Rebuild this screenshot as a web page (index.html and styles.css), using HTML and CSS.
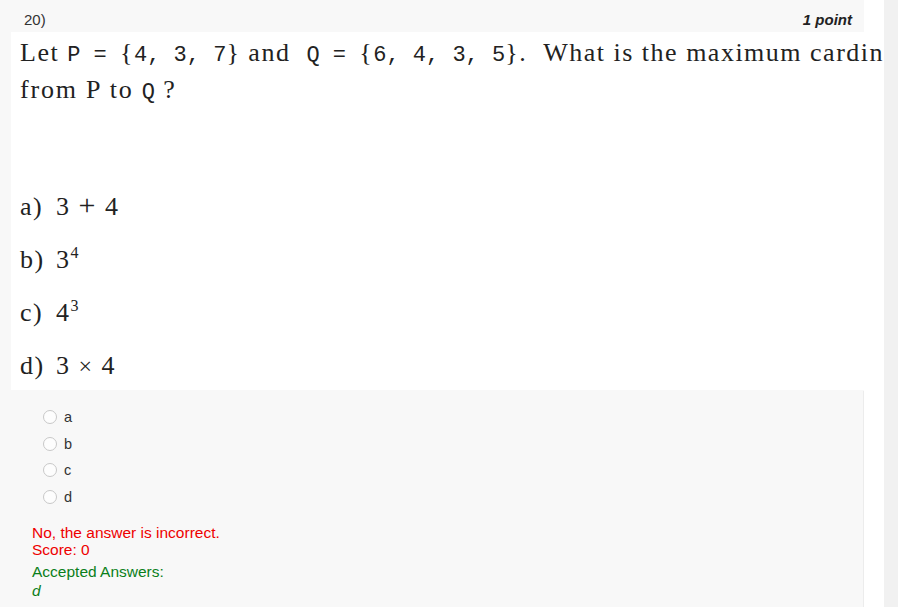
FILE: index.html
```html
<!DOCTYPE html>
<html>
<head>
<meta charset="utf-8">
<link rel="stylesheet" href="styles.css">
</head>
<body>
<div class="page">
  <div class="main">
    <div class="header">
      <span class="qnum">20)</span>
      <span class="points">1 point</span>
    </div>
    <div class="figure">
      <div class="line l1">Let <span class="tt">P = </span>{<span class="tt">4, 3, 7</span>} and <span class="tt gap">Q = </span>{<span class="tt">6, 4, 3, 5</span>}.<span class="sentence">What is the maximum cardinality of a relation</span></div>
      <div class="line l2">from P to <span class="tt">Q</span> ?</div>
      <div class="opts">
        <div class="opt"><span class="tag">a)</span><span>3</span><span class="op">+</span><span>4</span></div>
        <div class="opt"><span class="tag">b)</span><span>3<sup>4</sup></span></div>
        <div class="opt"><span class="tag">c)</span><span>4<sup>3</sup></span></div>
        <div class="opt"><span class="tag">d)</span><span>3</span><span class="op times">×</span><span>4</span></div>
      </div>
    </div>
    <div class="answers">
      <div class="choice"><span class="radio"></span><span class="lbl">a</span></div>
      <div class="choice"><span class="radio"></span><span class="lbl">b</span></div>
      <div class="choice"><span class="radio"></span><span class="lbl">c</span></div>
      <div class="choice"><span class="radio"></span><span class="lbl">d</span></div>
      <div class="feedback">
        <div class="wrong">No, the answer is incorrect.<br>Score: 0</div>
        <div class="accepted">Accepted Answers:<br><em>d</em></div>
      </div>
    </div>
  </div>
  <div class="gutter"></div>
  <div class="scroll"></div>
</div>
</body>
</html>
```

FILE: styles.css
```css
html, body {
  margin: 0;
  padding: 0;
  background: #ffffff;
}
.page {
  display: flex;
  height: 607px;
  overflow: hidden;
}
.main {
  width: 864px;
  flex: none;
  background: #f8f8f8;
  font-family: "Liberation Sans", Arial, sans-serif;
  color: #333333;
  position: relative;
  z-index: 1;
}
.gutter {
  width: 20px;
  flex: none;
}
.scroll {
  width: 14px;
  flex: none;
  background: #f1f1f1;
  position: relative;
  z-index: 2;
}
.header {
  height: 32px;
  display: flex;
  justify-content: space-between;
  align-items: center;
  padding: 7px 12px 0 24px;
  box-sizing: border-box;
  font-size: 15px;
}
.points {
  font-weight: bold;
  font-style: italic;
  color: #222;
}
.figure {
  margin-left: 11px;
  width: 872px;
  height: 358px;
  background: #ffffff;
  overflow: hidden;
  box-sizing: border-box;
  padding: 4px 0 0 9px;
  font-family: "Liberation Serif", "Times New Roman", serif;
  font-size: 26px;
  letter-spacing: 1.5px;
  color: #222;
}
.line {
  white-space: pre;
  line-height: 34px;
}
.tt {
  font-family: "Liberation Mono", "Courier New", monospace;
  font-size: 22px;
  letter-spacing: 0;
  color: #222;
}
.gap {
  margin-left: 8px;
}
.sentence {
  margin-left: 16px;
}
.l2 {
  letter-spacing: 1.8px;
}
.opts {
  margin-top: 68px;
}
.opt {
  line-height: 53px;
  display: flex;
  align-items: baseline;
}
.tag {
  width: 36px;
}
.op {
  margin: 0 8px;
  font-size: 30px;
}
.times {
  font-size: 24px;
}
.opt sup {
  font-size: 16px;
  letter-spacing: 0;
  vertical-align: 10px;
  line-height: 0;
}
.answers {
  margin-top: 1px;
  padding: 13px 0 0 32px;
  border-right: 1px solid #ececec;
  width: 831px;
  height: 300px;
}
.choice {
  display: flex;
  align-items: center;
  height: 26.5px;
  padding-left: 11px;
  font-size: 14.5px;
}
.radio {
  width: 12px;
  height: 12px;
  border: 1px solid #c8c8c8;
  border-radius: 50%;
  background: #fdfdfd;
  margin-right: 7px;
}
.feedback {
  margin-top: 14px;
  font-size: 15.5px;
  line-height: 17px;
}
.wrong {
  color: #ee0000;
}
.accepted {
  margin-top: 4px;
  line-height: 19px;
  color: #0a7f1a;
}
```
